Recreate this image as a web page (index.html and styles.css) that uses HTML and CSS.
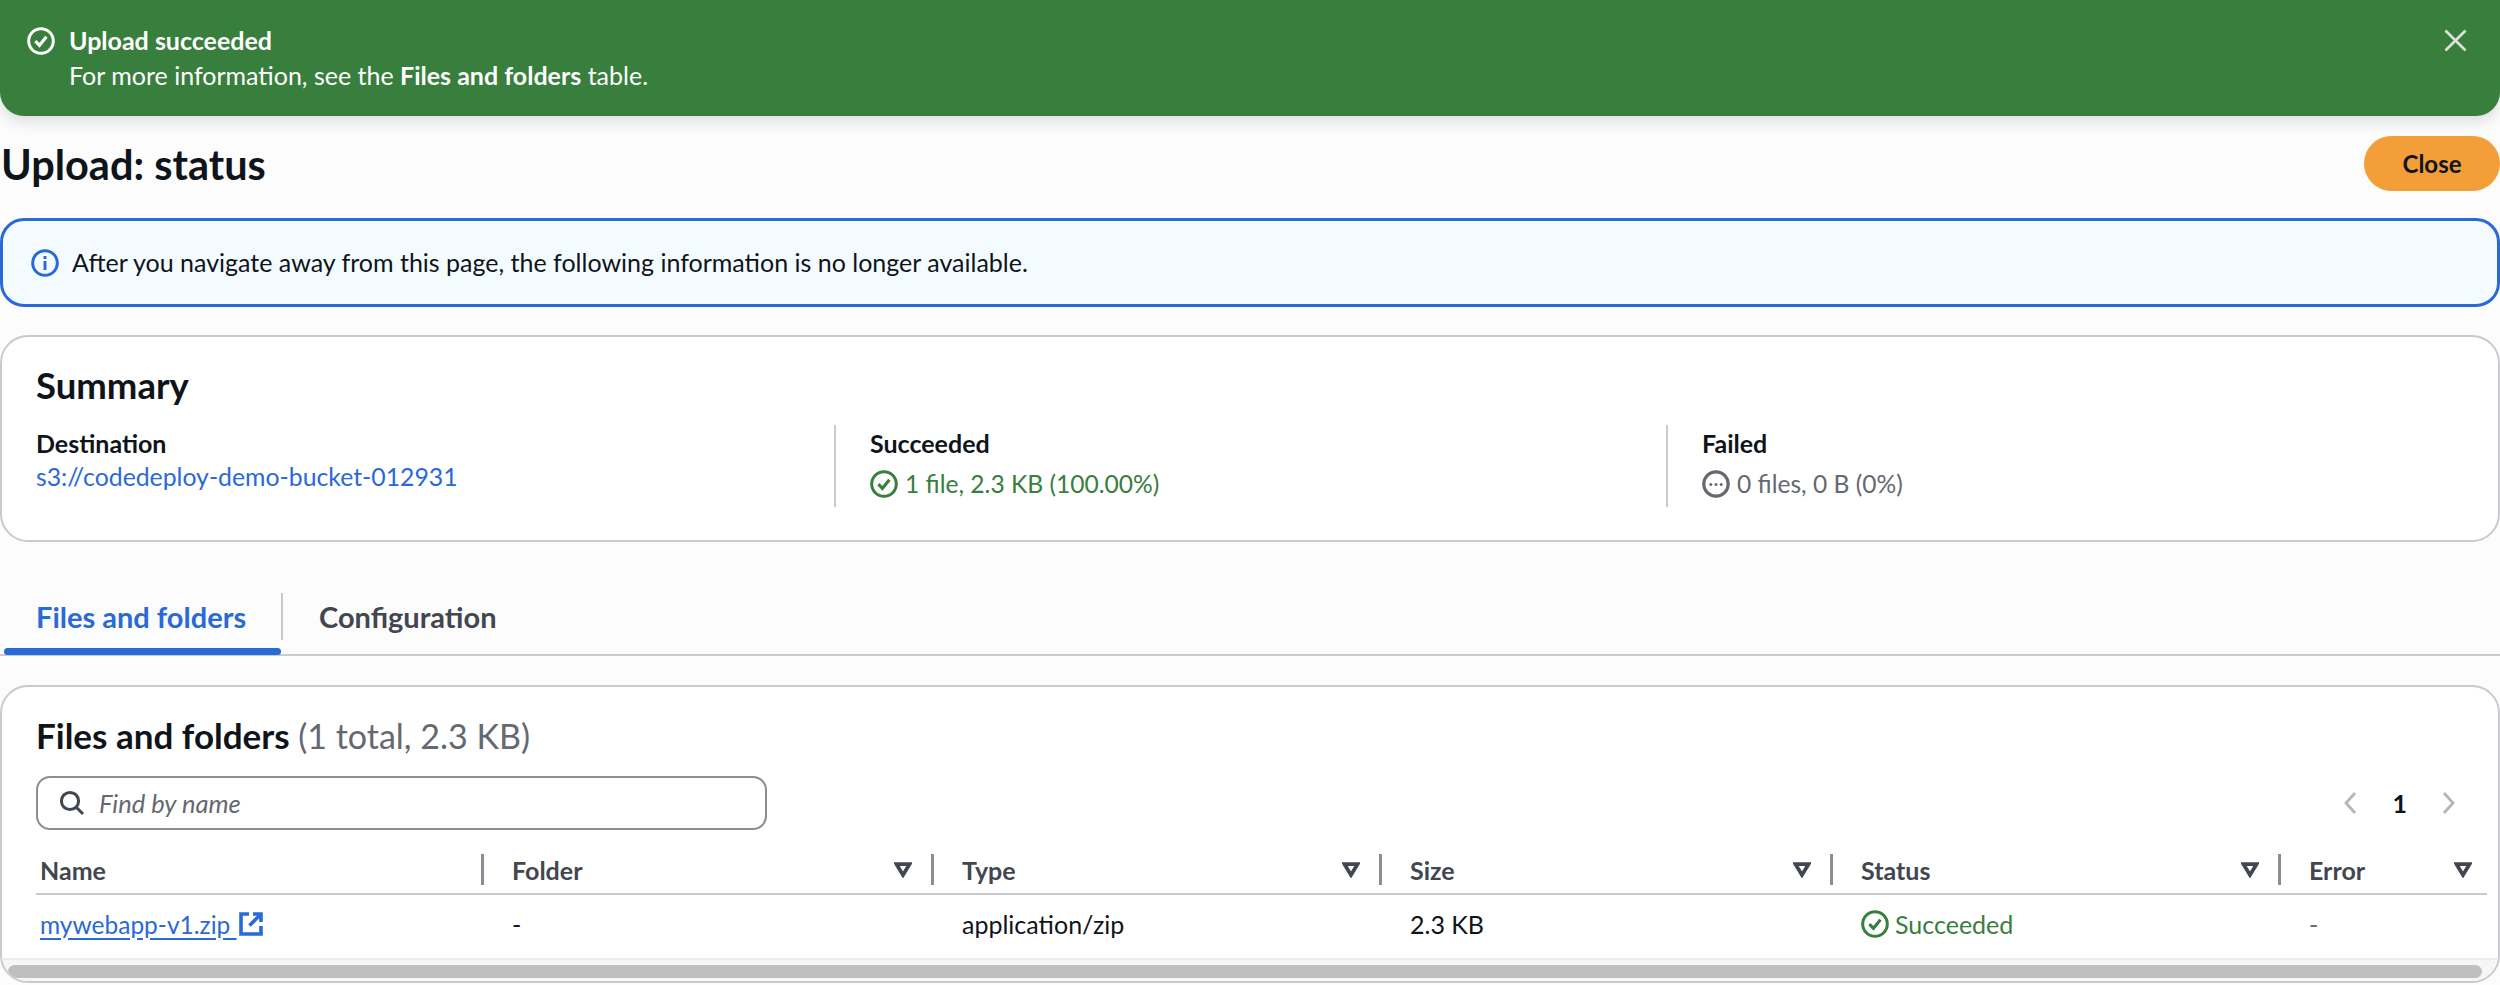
FILE: index.html
```html
<!DOCTYPE html>
<html lang="en">
<head>
<meta charset="utf-8">
<title>Upload: status</title>
<link rel="stylesheet" href="styles.css">
</head>
<body>
<svg class="defs" width="0" height="0" aria-hidden="true">
  <symbol id="check" viewBox="0 0 28 28"><circle cx="14" cy="14" r="12.3" fill="none" stroke="currentColor" stroke-width="3"/><path d="M8.4 14.2l4 4.2 7-8.6" fill="none" stroke="currentColor" stroke-width="3.2"/></symbol>
  <symbol id="filter" viewBox="0 0 18 16"><path d="M2.5 2.2h13L9 13z" fill="none" stroke="currentColor" stroke-width="3.7" stroke-linejoin="miter"/></symbol>
</svg>

<section class="flash">
  <svg class="ico-flash"><use href="#check"/></svg>
  <div class="flash-body">
    <div class="flash-title">Upload succeeded</div>
    <div class="flash-text">For more information, see the <b>Files and folders</b> table.</div>
  </div>
  <svg class="flash-x" viewBox="0 0 24 24"><path d="M1.5 1.5l21 21M22.5 1.5l-21 21" fill="none" stroke="currentColor" stroke-width="2.8"/></svg>
</section>

<header class="page-head">
  <h1>Upload: status</h1>
  <button class="btn-close">Close</button>
</header>

<section class="info">
  <svg class="ico-info" viewBox="0 0 28 28"><circle cx="14" cy="14" r="12.3" fill="none" stroke="currentColor" stroke-width="3"/><path d="M14 12v9" stroke="currentColor" stroke-width="3"/><path d="M14 7v3" stroke="currentColor" stroke-width="3"/></svg>
  <span>After you navigate away from this page, the following information is no longer available.</span>
</section>

<section class="card summary">
  <h2>Summary</h2>
  <div class="cols">
    <div class="col">
      <div class="label">Destination</div>
      <a class="link">s3://codedeploy-demo-bucket-012931</a>
    </div>
    <div class="col col-div">
      <div class="label">Succeeded</div>
      <div class="status ok"><svg class="ico-status"><use href="#check"/></svg>1 file, 2.3 KB (100.00%)</div>
    </div>
    <div class="col col-div">
      <div class="label">Failed</div>
      <div class="status muted"><svg class="ico-status" viewBox="0 0 28 28"><circle cx="14" cy="14" r="12.2" fill="none" stroke="currentColor" stroke-width="3.2"/><circle cx="8.8" cy="14.5" r="1.5" fill="currentColor"/><circle cx="14" cy="14.5" r="1.5" fill="currentColor"/><circle cx="19.2" cy="14.5" r="1.5" fill="currentColor"/></svg>0 files, 0 B (0%)</div>
    </div>
  </div>
</section>

<nav class="tabs">
  <div class="tab active">Files and folders</div>
  <div class="tab">Configuration</div>
</nav>

<section class="card files">
  <h2>Files and folders <span class="count">(1 total, 2.3 KB)</span></h2>
  <div class="tools">
    <div class="search">
      <svg class="ico-search" viewBox="0 0 26 26"><circle cx="11" cy="11" r="8.6" fill="none" stroke="currentColor" stroke-width="3"/><path d="M17 17l7 7" stroke="currentColor" stroke-width="3"/></svg>
      <span>Find by name</span>
    </div>
    <div class="pager">
      <svg class="chev" viewBox="0 0 14 24"><path d="M12 2L3 12l9 10" fill="none" stroke="currentColor" stroke-width="2.8"/></svg>
      <span class="page">1</span>
      <svg class="chev" viewBox="0 0 14 24"><path d="M2 2l9 10-9 10" fill="none" stroke="currentColor" stroke-width="2.8"/></svg>
    </div>
  </div>
  <div class="table">
    <div class="thead">
      <div class="th"><span>Name</span></div>
      <div class="th"><span>Folder</span><svg class="ico-filter"><use href="#filter"/></svg></div>
      <div class="th"><span>Type</span><svg class="ico-filter"><use href="#filter"/></svg></div>
      <div class="th"><span>Size</span><svg class="ico-filter"><use href="#filter"/></svg></div>
      <div class="th"><span>Status</span><svg class="ico-filter"><use href="#filter"/></svg></div>
      <div class="th last"><span>Error</span><svg class="ico-filter"><use href="#filter"/></svg></div>
    </div>
    <div class="tbody">
      <div class="td first"><a class="ext"><span class="ext-text">mywebapp-v1.zip&nbsp;</span><svg class="ico-ext" viewBox="0 0 24 24"><path d="M10 2H2v20h20v-8" fill="none" stroke="currentColor" stroke-width="3.6"/><path d="M10.5 13.5L21 3M14 2h8v8" fill="none" stroke="currentColor" stroke-width="3.6"/></svg></a></div>
      <div class="td">-</div>
      <div class="td">application/zip</div>
      <div class="td">2.3 KB</div>
      <div class="td ok"><svg class="ico-status"><use href="#check"/></svg>Succeeded</div>
      <div class="td muted">-</div>
    </div>
  </div>
  <div class="scroll"><div class="thumb"></div></div>
</section>
</body>
</html>
```
FILE: styles.css
```css
* { box-sizing: border-box; }
html, body { margin: 0; padding: 0; }
body {
  width: 2500px;
  height: 985px;
  overflow: hidden;
  background: #fcfcfc;
  color: #0f141a;
  font-family: Lato, "Noto Sans", sans-serif;
  font-size: 25px;
  line-height: 35px;
}
.defs { position: absolute; }
h1, h2 { margin: 0; font-weight: 700; }

.flash {
  display: flex;
  height: 116px;
  padding: 23px 33px 0 27px;
  background: #387e3c;
  color: #fff;
  border-radius: 0 0 24px 24px;
  box-shadow: 0 6px 14px rgba(0,0,0,.12);
}
.ico-flash { width: 28px; height: 28px; margin-top: 4px; flex: none; }
.flash-body { flex: 1; margin-left: 14px; }
.flash-title { font-weight: 700; }
.flash-text b { font-weight: 700; }
.flash-x { width: 23px; height: 23px; margin-top: 6px; color: #e0e0e0; flex: none; }

.page-head {
  display: flex;
  justify-content: space-between;
  align-items: center;
  height: 55px;
  margin-top: 20px;
}
h1 { font-size: 41.5px; line-height: 46px; padding-left: 1px; }
.btn-close {
  width: 136px;
  height: 55px;
  border: 0;
  border-radius: 28px;
  background: #f39e38;
  color: #0f141a;
  font: 700 24px Lato, sans-serif;
}

.info {
  display: flex;
  align-items: center;
  gap: 13px;
  height: 89px;
  margin-top: 27px;
  padding-left: 28px;
  background: #f3fbff;
  border: 3px solid #2a69d8;
  border-radius: 24px;
}
.ico-info { width: 28px; height: 28px; color: #2a69d8; flex: none; }

.card {
  background: #fff;
  border: 2px solid #c9c9cf;
  border-radius: 28px;
}
h2 { font-size: 35px; line-height: 42px; }
.summary { height: 207px; margin-top: 28px; padding: 27px 34px 0; }
.summary h2 { font-size: 36.5px; }
.cols { display: grid; grid-template-columns: 798px 832px 1fr; margin-top: 19px; }
.col { height: 82px; }
.col-div { border-left: 2px solid #c9c9cf; padding-left: 34px; }
.label { font-weight: 700; line-height: 32px; padding-top: 2px; }
.link { color: #2a69d8; display: block; line-height: 36px; font-size: 24.8px; }
.status { display: flex; align-items: center; gap: 7px; line-height: 40px; margin-top: 5px; font-size: 24.6px; }
.ok { color: #387e3c; }
.muted { color: #656871; }
.ico-status { width: 28px; height: 28px; flex: none; }

.tabs {
  display: flex;
  height: 63px;
  margin-top: 51px;
  border-bottom: 2px solid #c9c9cf;
  font-weight: 700;
  font-size: 29px;
  color: #424650;
}
.tab { padding: 6px 36px 0; height: 47px; line-height: 36px; white-space: nowrap; }
.tab.active {
  position: relative;
  width: 283px;
  color: #2a69d8;
  border-right: 2px solid #c9c9cf;
}
.tab.active::after {
  content: "";
  position: absolute;
  left: 4px;
  right: 0;
  bottom: -15px;
  height: 7px;
  border-radius: 4px;
  background: #2a69d8;
}

.files { height: 298px; margin-top: 29px; padding: 27px 0 0 34px; position: relative; overflow: hidden; }
.count { font-weight: 400; color: #656871; font-size: 34px; }
.tools { display: flex; justify-content: space-between; align-items: center; height: 54px; margin-top: 19px; padding-right: 42px; }
.search {
  display: flex;
  align-items: center;
  width: 731px;
  height: 54px;
  padding-left: 21px;
  gap: 14px;
  border: 2px solid #8c8c94;
  border-radius: 14px;
  color: #656871;
  font-style: italic;
  font-size: 25.5px;
}
.ico-search { width: 26px; height: 26px; flex: none; color: #424650; }
.pager { display: flex; align-items: center; gap: 35px; }
.chev { width: 14px; height: 24px; color: #b4b4bb; }
.page { font-weight: 700; }

.table { margin-right: 11px; margin-top: 24px; }
.thead, .tbody { display: grid; grid-template-columns: 448px 450px 448px 451px 448px 1fr; }
.thead { height: 41px; border-bottom: 2px solid #c9c9cf; color: #424650; font-weight: 700; }
.th { display: flex; justify-content: space-between; align-items: flex-start; height: 31px; line-height: 33px; padding: 0 19px 0 28px; border-right: 3px solid #8c8c94; }
.th:first-child { padding-left: 4px; }
.th.last { border-right: 0; padding-right: 15px; }
.ico-filter { width: 18px; height: 16px; margin-top: 8px; }
.tbody { height: 58px; align-items: center; }
.td { display: flex; align-items: center; gap: 6px; padding-left: 28px; }
.td.first { padding-left: 4px; }
.ext { display: flex; align-items: center; color: #2a69d8; }
.ext-text { font-size: 24.5px; text-decoration: underline; text-underline-offset: 4px; }
.ico-ext { width: 24px; height: 24px; margin-left: 2px; flex: none; }

.scroll { position: absolute; left: 0; right: 0; bottom: 0; height: 23px; border-top: 2px solid #ececec; background: #f6f6f6; padding: 5px 16px 0 6px; }
.thumb { height: 13px; background: #bfbfbf; border-radius: 7px; }
```
